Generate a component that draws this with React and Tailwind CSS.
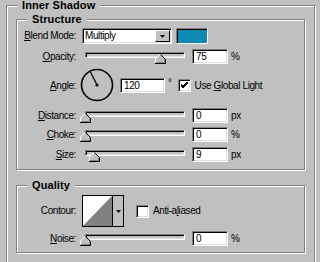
import React from 'react'

// little Win9x-style pieces
const sunken =
  'border border-t-[#808080] border-l-[#808080] border-r-white border-b-white shadow-[inset_1px_1px_0_#000,inset_-1px_-1px_0_#dfdfdf]'

const GroupBox = ({ title, className, children }) => (
  <div
    className={`relative border border-[#808080] shadow-[inset_1px_1px_0_#fff,1px_1px_0_#fff] ${className}`}
  >
    <span className="absolute left-[10px] top-[-7px] h-[13px] bg-[#c0c0c0] px-[5px] text-[11px] font-bold leading-[13px] tracking-[0.1px] text-black">
      {title}
    </span>
    {children}
  </div>
)

const Label = ({ children }) => (
  <div className="w-[59px] shrink-0 text-right">{children}</div>
)

const Thumb = () => (
  <svg width="11" height="10" viewBox="0 0 11 10">
    <polygon points="0,5 5,0 10,5 10,9.5 0,9.5" fill="#c0c0c0" />
    <polyline points="0.5,9 0.5,5 5,0.5" fill="none" stroke="#fff" strokeWidth="1" />
    <polyline points="5.5,0.5 10.5,5.5 10.5,9.5 0,9.5" fill="none" stroke="#000" strokeWidth="1" />
    <polyline points="9.5,5.5 9.5,8.5 1,8.5" fill="none" stroke="#808080" strokeWidth="1" />
  </svg>
)

const Slider = ({ pos }) => (
  <div className="relative ml-[4px] h-[15px] w-[110px] shrink-0">
    <div className={`mx-[5px] mt-[3px] h-[6px] bg-[#c0c0c0] ${sunken}`} />
    <div className="absolute top-[5px]" style={{ left: pos }}>
      <Thumb />
    </div>
  </div>
)

const Field = ({ value, w = 'w-[36px]', className = '' }) => (
  <div className={`h-[15px] shrink-0 bg-white pl-[3px] leading-[13px] ${w} ${sunken} ${className}`}>
    {value}
  </div>
)

const Check = ({ checked }) => (
  <div className={`flex h-[13px] w-[13px] shrink-0 items-center justify-center bg-white ${sunken}`}>
    {checked && (
      <svg width="7" height="7" viewBox="0 0 7 7">
        <path d="M0 3 L2 5 L7 0 M0 4 L2 6 L7 1 M0 2 L2 4 L7 -1" stroke="#000" strokeWidth="1" fill="none" />
      </svg>
    )}
  </div>
)

const SliderRow = ({ label, pos, value, unit, className = '' }) => (
  <div className={`flex h-[15px] items-center ${className}`}>
    <Label>{label}</Label>
    <Slider pos={pos} />
    <Field value={value} className="ml-[2px]" />
    <span className="ml-[3px]">{unit}</span>
  </div>
)

export default function App() {
  return (
    <div className="h-[262px] w-[320px] overflow-hidden bg-[#c0c0c0] font-['Liberation_Sans',Arial,sans-serif] text-[10px] leading-[12px] tracking-[-0.4px] text-black">
      <GroupBox title="Inner Shadow" className="ml-[6px] mt-[5px] h-[262px] w-[309px]">
        <div className="pl-[9px] pt-[13px]">
          {/* Structure */}
          <GroupBox title="Structure" className="h-[151px] w-[289px]">
            <div className="flex h-[16px] items-center mt-[8px]">
              <Label>
                <u>B</u>lend Mode:
              </Label>
              <div className={`ml-[6px] flex h-[16px] w-[90px] shrink-0 items-center bg-white ${sunken}`}>
                <span className="flex-1 pl-[2px]">Multiply</span>
                <div className="mr-[1px] flex h-[12px] w-[15px] items-center justify-center border border-t-white border-l-white border-r-black border-b-black bg-[#c0c0c0]">
                  <svg width="5" height="3" viewBox="0 0 5 3">
                    <polygon points="0,0 5,0 2.5,3" fill="#000" />
                  </svg>
                </div>
              </div>
              <div className="ml-[4px] h-[16px] w-[32px] shrink-0 border border-t-[#808080] border-l-[#808080] border-r-white border-b-white bg-[#0e8ab2] shadow-[inset_1px_1px_0_#000]" />
            </div>

            <SliderRow
              label={<><u>O</u>pacity:</>}
              pos="75px"
              value="75"
              unit="%"
              className="mt-[5px]"
            />

            <div className="mt-[3px] flex h-[37px] items-center">
              <Label>
                <u>A</u>ngle:
              </Label>
              <svg className="ml-[4px] shrink-0" width="36" height="37" viewBox="0 0 36 37">
                <circle cx="17" cy="18" r="15.5" fill="none" stroke="#000" strokeWidth="1.6" />
                <line x1="17" y1="18" x2="10.5" y2="5" stroke="#000" strokeWidth="1.2" />
                <circle cx="17" cy="18" r="1.6" fill="#000" />
              </svg>
              <Field value="120" w="w-[45px]" className="ml-[4px]" />
              <span className="ml-[3px] mt-[10px] self-start">°</span>
              <div className="ml-[6px]">
                <Check checked />
              </div>
              <span className="ml-[4px]">
                Use <u>G</u>lobal Light
              </span>
            </div>

            <SliderRow
              label={<><u>D</u>istance:</>}
              pos="0px"
              value="0"
              unit="px"
              className="mt-[4px]"
            />
            <SliderRow
              label={<><u>C</u>hoke:</>}
              pos="0px"
              value="0"
              unit="%"
              className="mt-[4px]"
            />
            <SliderRow
              label={<><u>S</u>ize:</>}
              pos="9px"
              value="9"
              unit="px"
              className="mt-[5px]"
            />
          </GroupBox>

          {/* Quality */}
          <GroupBox title="Quality" className="mt-[15px] h-[68px] w-[289px]">
            <div className="mt-[9px] flex h-[32px] items-center">
              <Label>Contour:</Label>
              <div className="ml-[6px] flex h-[32px] w-[42px] shrink-0 border border-black bg-[#c0c0c0]">
                <svg width="29" height="30" viewBox="0 0 29 30" className="shrink-0">
                  <polygon points="0,0 29,0 0,30" fill="#fff" />
                  <polygon points="29,0 29,30 0,30" fill="#808080" />
                </svg>
                <div className="flex flex-1 items-center justify-center border-l border-black">
                  <svg width="5" height="3" viewBox="0 0 5 3">
                    <polygon points="0,0 5,0 2.5,3" fill="#000" />
                  </svg>
                </div>
              </div>
              <div className="ml-[12px]">
                <Check />
              </div>
              <span className="ml-[4px]">
                Anti-a<u>l</u>iased
              </span>
            </div>
            <SliderRow
              label={<><u>N</u>oise:</>}
              pos="0px"
              value="0"
              unit="%"
              className="mt-[4px]"
            />
          </GroupBox>
        </div>
      </GroupBox>
    </div>
  )
}
